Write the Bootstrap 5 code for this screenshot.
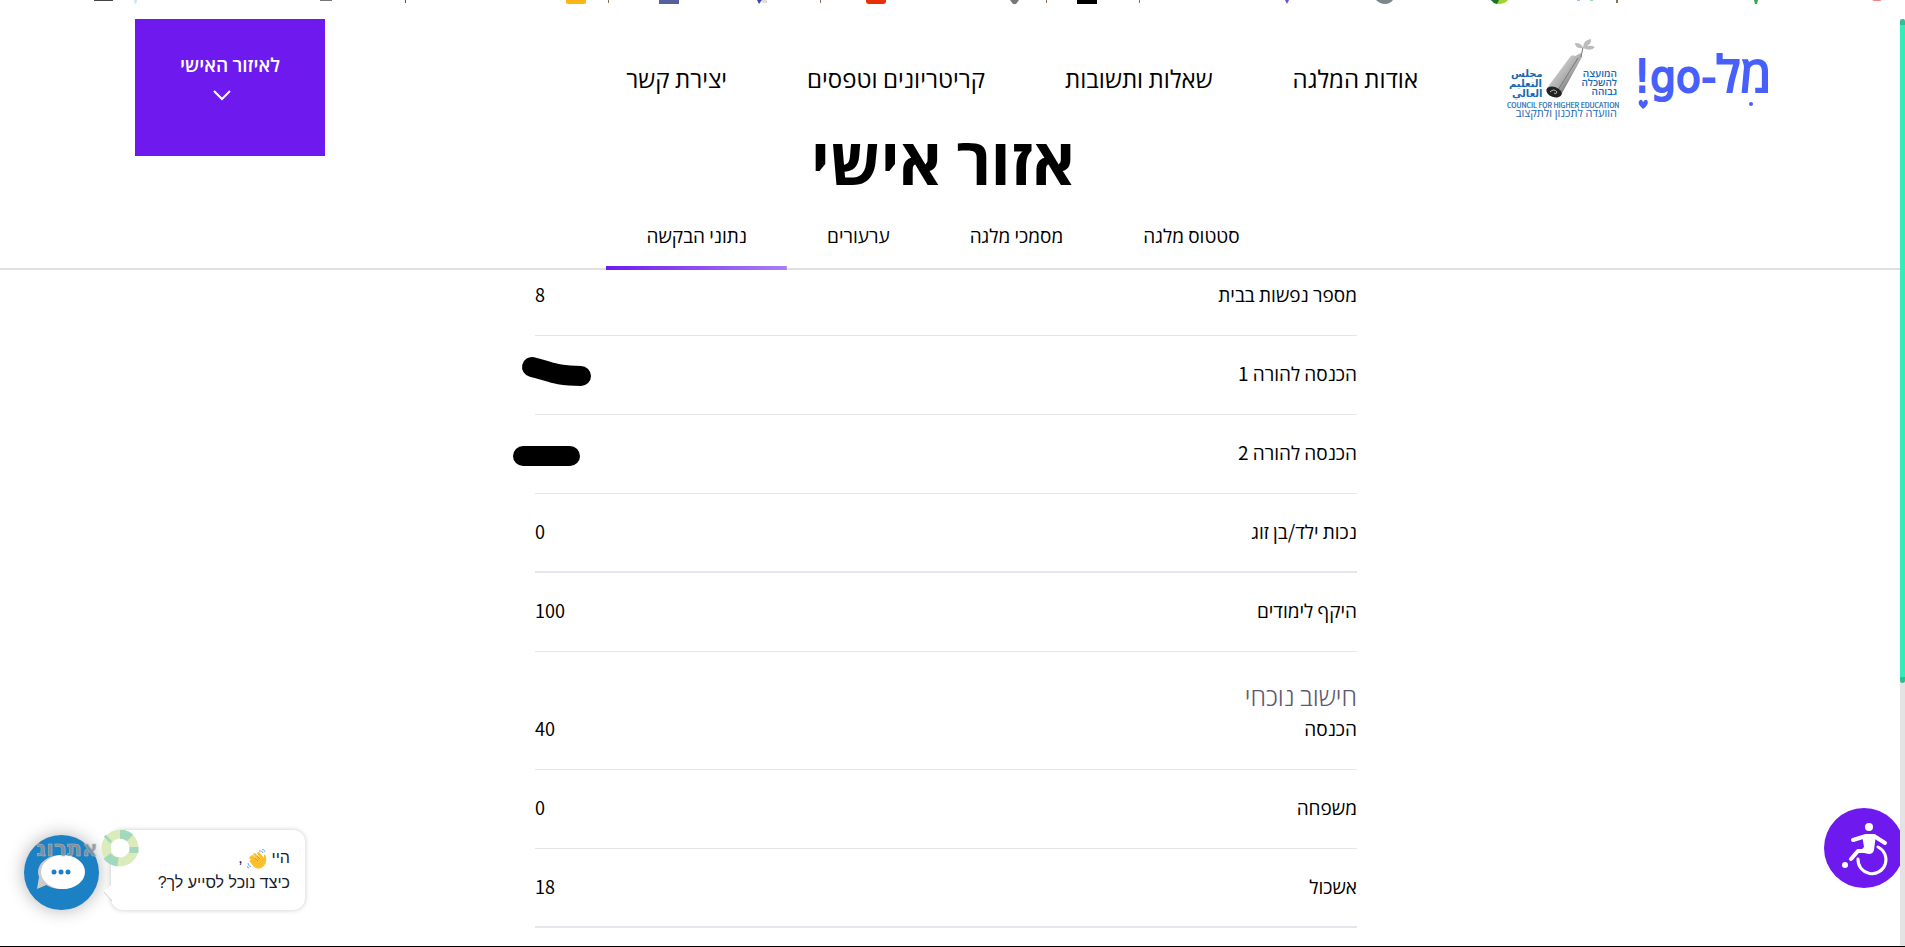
<!DOCTYPE html>
<html lang="he" dir="rtl">
<head>
<meta charset="utf-8">
<meta name="viewport" content="width=device-width, initial-scale=1">
<title>אזור אישי</title>
<link href="https://cdn.jsdelivr.net/npm/bootstrap@5.3.0/dist/css/bootstrap.min.css" rel="stylesheet">
<style>
:root{--brand:#6e1aef}
body{font-family:"Noto Sans CJK SC","Open Sans",sans-serif;color:#000;background:#fff;height:100vh;overflow:hidden}
.page-shell{height:100vh;padding-right:5px;border-bottom:1px solid #000;overflow:hidden}
.favicon-strip{top:0;left:0;width:100%;height:4px}
.site-header{padding:19px 134px 0 135px}
.brand-link{margin-top:20px;gap:20px}
.brand-link svg{overflow:visible}
.main-menu{gap:80px;margin-top:39px;margin-right:91px}
.main-menu a{font-size:24px;line-height:40px;color:#000}
.area-btn{width:190px;height:137px;background:var(--brand);color:#fff;font-size:19px;font-weight:600;line-height:28px;padding-top:31px}
.area-btn svg{margin:12px 0 0 0;margin-right:16px}
.page-title{font-size:65px;font-weight:700;line-height:80px;margin:-39px 14px 0 0}
.area-tabs{border-bottom:2px solid #e0e0e0;margin-top:19px;padding-right:14px}
.area-tabs a{padding:0 40px;font-size:19px;line-height:38px;height:54px;margin-bottom:-2px;color:#000;display:block}
.area-tabs a.active{background:linear-gradient(to right,#6e1aef,#a97ff2) bottom/100% 4px no-repeat}
.data-wrap{max-width:830px;padding-right:8px;margin:-13px auto 0}
.data-table{width:100%;font-size:19px;line-height:24px}
.data-table th,.data-table td{font-weight:400;padding:25px 0 29px;border-bottom:1px solid #e5e6e9}
.data-table td{text-align:left;font-size:18px}
.data-table .strong-rule th,.data-table .strong-rule td{border-bottom:2px solid #e6e6ec;padding-bottom:28px}
.data-table.calc tr:first-child>*{padding-top:4px}
.calc-title{font-size:25px;font-weight:300;line-height:32px;color:#5c5870;margin:27px 0 1px}
.ink{left:-22px;top:16px}
.scroll-rail{right:0;top:19px;bottom:0;width:5px;background:#e3e3e3}
.scroll-thumb{height:664px;background:#37ebb9;border:solid #2dbf97;border-width:6px 0;border-radius:3px}
.access-btn{right:0;bottom:58px;width:92px;height:80px;padding:0;clip-path:inset(0 5px 0 0)}
.chat{left:24px;bottom:36px}
.chat-btn{width:75px;height:75px;background:#1c80c5;box-shadow:0 0 18px rgba(0,0,0,.3)}
.chat-bubble{width:194px;height:80px;border-radius:12px;background:#fff;box-shadow:0 0 5px rgba(0,0,0,.22);font:16px/25px "Liberation Sans",sans-serif;color:#1c1c2c;padding:15px 15px 0 0;margin-left:12px}
.chat-tail{left:78px;top:50px}
.watermark{left:12px;top:0}
</style>
</head>
<body>
<div class="page-shell position-relative">
<svg class="favicon-strip position-absolute" viewBox="0 0 1905 4" preserveAspectRatio="none" aria-hidden="true">
<path d="M94 0h19v1H94z" fill="#444"/><path d="M134 0h3v2l-2 2z" fill="#cfe0fb"/><path d="M320 0h12v1h-12z" fill="#777"/><path d="M405 0h1v3h-1z" fill="#267"/><rect x="566" y="-8" width="20" height="12" rx="2" fill="#fdb515"/><path d="M608 0h1v3h-1zM820 0h1v3h-1zM1046 0h1v3h-1zM1139 0h1v3h-1zM1616 0h2v3h-2z" fill="#85705c"/><path d="M659 0h20v4h-20z" fill="#56609d"/><path d="M757 0h5l-3 4z" fill="#4246b5"/><path d="M762 0h5v3h-5z" fill="#ddd"/><rect x="866" y="-8" width="20" height="12" rx="3" fill="#ea2e08"/><path d="M1010 0h9l-3 4h-3z" fill="#777"/><path d="M1077 0h20v4h-20z" fill="#000"/><path d="M1285 0h4l-2 4z" fill="#7049ee"/><path d="M1376 0h17q-3 4-8 4t-9-4z" fill="#7b878c"/><path d="M1491 0h17q-3 4-9 4t-8-4z" fill="#a3d332"/><path d="M1491 0h8l-2 4q-4-1-6-4z" fill="#197328"/><path d="M1577 0h3v1h-3z" fill="#9bc0f4"/><path d="M1590 0h3v1h-3z" fill="#9cd8ad"/><path d="M1754 0h4l-1 4h-2z" fill="#34a853"/><path d="M1872 0h10l-2 1h-6z" fill="#e98686"/>
</svg>

<header class="site-header d-flex align-items-start">
  <a href="#" class="brand-link d-flex text-decoration-none">
    <svg width="128" height="80" viewBox="0 0 128 80" direction="ltr" fill="#4860fb">
      <text x="-4" y="53" font-family="DejaVu Sans Condensed,DejaVu Sans,sans-serif" font-size="45" stroke="#4860fb" stroke-width="2">!go-<tspan font-family="Open Sans,sans-serif" font-weight="500" font-size="50">מל</tspan></text>
      <path d="M5 70q-7-6-3-9 2-1 3 2 2-3 4-2 3 4-4 9z"/>
      <circle cx="113" cy="65" r="2"/>
    </svg>
    <svg width="109" height="80" viewBox="0 0 109 80" direction="ltr" fill="#1769b3" font-family="Open Sans,sans-serif" font-weight="600">
      <defs><linearGradient id="scroll" x1="0" x2="1" y1="0" y2="1"><stop offset=".2" stop-color="#ddd"/><stop offset=".55" stop-color="#aaa"/><stop offset=".8" stop-color="#555"/></linearGradient></defs>
      <path d="M38 49 61 18q2-3 5-1l6-3 1 4L52 56q-4 4-11 0-4-2-3-7z" fill="url(#scroll)"/>
      <path d="M72 18 74 8M49 51 69 19" stroke="#777" fill="none"/>
      <ellipse cx="45" cy="53" rx="8" ry="5" transform="rotate(20 45 53)" fill="#222"/><path d="M41 53q4-4 7 0-1 3-3 1" fill="none" stroke="#bbb"/>
      <path d="M74 9q-8 1-8-5 7 0 8 5zq0-8 8-9 1 6-8 9zq6-4 12-1-4 5-12 1z" fill="#bbb"/>
      <g font-family="DejaVu Sans,sans-serif" font-size="10" font-weight="700"><text x="2" y="38">مجلس</text><text x="0" y="48">التعليم</text><text x="3" y="58">العالي</text></g>
      <g font-size="10" text-anchor="end"><text x="108" y="38">המועצה</text><text x="108" y="47">להשכלה</text><text x="108" y="56">גבוהה</text></g>
      <text x="-2" y="69" font-family="Noto Sans CJK SC,sans-serif" font-size="7" font-weight="400" stroke="#1769b3" stroke-width=".2">COUNCIL FOR HIGHER EDUCATION</text>
      <text x="108" y="78" font-size="11" font-weight="400" text-anchor="end">הוועדה לתכנון ולתקצוב</text>
    </svg>
  </a>
  <nav class="main-menu d-flex">
    <a href="#" class="text-decoration-none">אודות המלגה</a>
    <a href="#" class="text-decoration-none">שאלות ותשובות</a>
    <a href="#" class="text-decoration-none">קריטריונים וטפסים</a>
    <a href="#" class="text-decoration-none">יצירת קשר</a>
  </nav>
  <button type="button" class="area-btn border-0 me-auto d-flex flex-column align-items-center">לאיזור האישי
    <svg width="18" height="11" viewBox="0 0 18 11" fill="none" stroke="#fff" stroke-width="2"><path d="m1 1 8 8 8-8"/></svg>
  </button>
</header>
<h1 class="page-title text-center">אזור אישי</h1>
<nav class="area-tabs d-flex justify-content-center">
  <a href="#" class="text-decoration-none">סטטוס מלגה</a>
  <a href="#" class="text-decoration-none">מסמכי מלגה</a>
  <a href="#" class="text-decoration-none">ערעורים</a>
  <a href="#" class="active text-decoration-none" aria-current="page">נתוני הבקשה</a>
</nav>
<main class="data-wrap">
  <table class="data-table">
    <tbody>
    <tr><th scope="row">מספר נפשות בבית</th><td>8</td></tr>
    <tr><th scope="row">הכנסה להורה 1</th><td class="position-relative"><svg class="ink position-absolute" width="80" height="40" fill="none" stroke="#000" stroke-width="20" stroke-linecap="round" aria-hidden="true"><path d="M19 15C37 19 41 24 68 24"/></svg></td></tr>
    <tr><th scope="row">הכנסה להורה 2</th><td class="position-relative"><svg class="ink position-absolute" width="80" height="50" fill="none" stroke="#000" stroke-width="20" stroke-linecap="round" aria-hidden="true"><path d="M10 25H57"/></svg></td></tr>
    <tr class="strong-rule"><th scope="row">נכות ילד/בן זוג</th><td>0</td></tr>
    <tr><th scope="row">היקף לימודים</th><td>100</td></tr>
    </tbody>
  </table>
  <h2 class="calc-title">חישוב נוכחי</h2>
  <table class="data-table calc">
    <tbody>
    <tr><th scope="row">הכנסה</th><td>40</td></tr>
    <tr><th scope="row">משפחה</th><td>0</td></tr>
    <tr class="strong-rule"><th scope="row">אשכול</th><td>18</td></tr>
    </tbody>
  </table>
</main>

<div class="chat position-absolute d-flex align-items-end" dir="ltr">
  <button type="button" class="chat-btn border-0 rounded-circle p-0" aria-label="צ'אט">
    <svg width="75" height="75" viewBox="0 0 75 75"><path d="M16 36 13 54l14-6z" fill="#ccc"/><ellipse cx="37" cy="37" rx="23" ry="17" fill="#ccc"/><ellipse cx="39" cy="37" rx="22" ry="17" fill="#fff"/><g fill="#1c80c5"><circle cx="30" cy="37" r="2.500"/><circle cx="37" cy="37" r="2.500"/><circle cx="44" cy="37" r="2.500"/></g></svg>
  </button>
  <div class="chat-bubble" dir="rtl">היי
    <svg width="20" height="20" viewBox="0 0 20 20" aria-hidden="true"><path d="M4 6q2-2 3 0l3 3-4-5q2-2 3 0l4 4-3-5q2-2 3 0l4 5 0-3q2-1 2 2 1 6-2 9-5 5-10 1L3 12q-1-2 1-2L2 8q1-2 2-2z" fill="#fcc02e" transform="translate(0 1)"/><path d="m8 9 3 3M10 7l3 3" stroke="#e59600"/><path d="M12 2q3-1 4 2M15 0q2 0 3 3M1 14q0 3 3 4M0 17q0 2 2 2" fill="none" stroke="#68a9ef"/></svg>
    ,<br>כיצד נוכל לסייע לך?</div>
  <svg class="chat-tail position-absolute" width="10" height="24" viewBox="0 0 10 24"><path d="M10 4 2 12l8 9" fill="#fff"/><path d="m2 12 8 9" stroke="#ccc" fill="none"/></svg>
  <svg class="watermark position-absolute" width="110" height="40" viewBox="0 0 110 40" direction="rtl" aria-hidden="true"><text x="62" y="26" font-family="DejaVu Sans,sans-serif" font-size="22" font-weight="700" fill="#87949c" fill-opacity=".85" stroke="#bbb" stroke-width=".5">אתרוג</text><g fill="none" stroke-width="9"><circle cx="84" cy="18" r="14" stroke="#dbebbb"/><path d="M84 4q6 0 10 4M82 32q-7-1-11-6M98 17v6M71 10l2-2" stroke="#a4d8bd"/></g></svg>
</div>

<button type="button" class="access-btn position-absolute border-0 bg-transparent" aria-label="נגישות">
  <svg class="d-block" width="92" height="80" viewBox="0 0 92 80"><circle cx="51" cy="40" r="40" fill="#6e1aef"/><g fill="none" stroke="#fff" stroke-linecap="round" stroke-linejoin="round"><path d="m40 32 13-4h8l11 7" stroke-width="4"/><path d="M65 39a14 14 0 1 1-20 12" stroke-width="3"/><path d="M56 43H45l-7 8" stroke-width="4"/></g><path d="M49 27h14l-2 15q-1 4-5 4l-10-2 5-5z" fill="#fff"/><circle cx="56" cy="19" r="4" fill="#fff"/><circle cx="32" cy="57" r="3" fill="#fff"/></svg>
</button>
<div class="scroll-rail position-absolute"><div class="scroll-thumb"></div></div>
</div>
<script src="https://cdn.jsdelivr.net/npm/bootstrap@5.3.0/dist/js/bootstrap.bundle.min.js"></script>
</body>
</html>
